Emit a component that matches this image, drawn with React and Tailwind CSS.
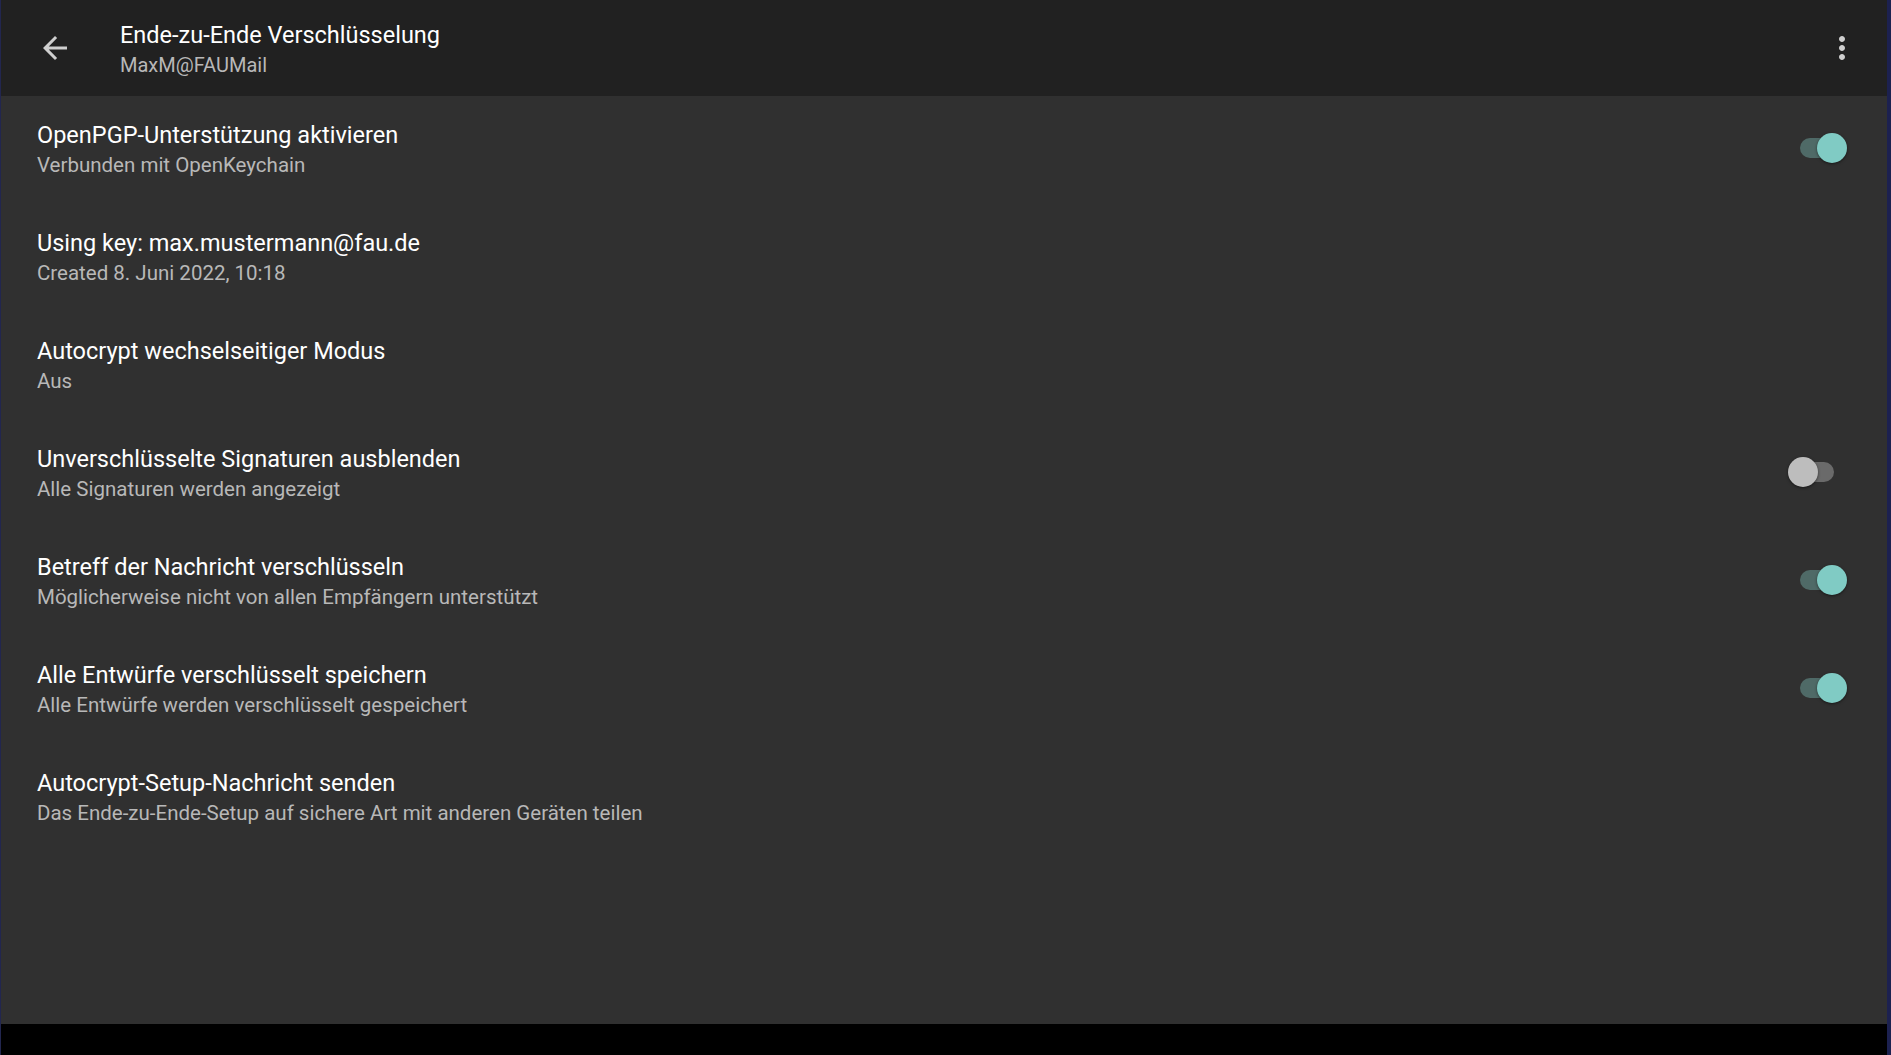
import React, { useState } from 'react';

const items = [
  { title: 'OpenPGP-Unterstützung aktivieren', summary: 'Verbunden mit OpenKeychain', toggle: true },
  { title: 'Using key: max.mustermann@fau.de', summary: 'Created 8. Juni 2022, 10:18' },
  { title: 'Autocrypt wechselseitiger Modus', summary: 'Aus' },
  { title: 'Unverschlüsselte Signaturen ausblenden', summary: 'Alle Signaturen werden angezeigt', toggle: false },
  { title: 'Betreff der Nachricht verschlüsseln', summary: 'Möglicherweise nicht von allen Empfängern unterstützt', toggle: true },
  { title: 'Alle Entwürfe verschlüsselt speichern', summary: 'Alle Entwürfe werden verschlüsselt gespeichert', toggle: true },
  { title: 'Autocrypt-Setup-Nachricht senden', summary: 'Das Ende-zu-Ende-Setup auf sichere Art mit anderen Geräten teilen' },
];

// little material style switch
function Switch({ checked, onChange }) {
  return (
    <button type="button" onClick={onChange} className="relative w-[59px] h-[30px] shrink-0 -mt-[5px]">
      <span
        className={`absolute left-[12px] top-[5px] w-[34px] h-[20px] rounded-full ${
          checked ? 'bg-[#4f6a67]' : 'bg-[#6a6a6a]'
        }`}
      />
      <span
        className={`absolute top-0 w-[30px] h-[30px] rounded-full shadow-[0_1px_3px_rgba(0,0,0,0.5)] ${
          checked ? 'left-[29px] bg-[#80cbc4]' : 'left-0 bg-[#bdbdbd]'
        }`}
      />
    </button>
  );
}

export default function App() {
  const [toggles, setToggles] = useState(items.map((i) => i.toggle));

  const flip = (idx) => {
    setToggles((prev) => prev.map((v, i) => (i === idx ? !v : v)));
  };

  return (
    <div
      className="w-full h-[1055px] flex flex-col bg-black border-l border-l-[#22264f] border-r-4 border-r-[#1c2150] overflow-hidden"
      style={{ fontFamily: 'Roboto, "Noto Sans", sans-serif' }}
    >
      {/* Toolbar */}
      <div className="h-[96px] shrink-0 bg-[#212121] flex items-center pl-[36px] pr-[27px]">
        <button type="button" className="w-[36px] h-[36px] shrink-0 text-[#cfcfcf]">
          <svg viewBox="0 0 24 24" className="w-[36px] h-[36px]" fill="currentColor">
            <path d="M20 11H7.83l5.59-5.59L12 4l-8 8 8 8 1.41-1.41L7.83 13H20v-2z" />
          </svg>
        </button>
        <div className="ml-[47px] flex-1 self-start pt-[20px]">
          <div className="text-[23.5px] leading-[30px] text-white">Ende-zu-Ende Verschlüsselung</div>
          <div className="text-[20px] leading-[30px] text-[#b8b8b8]">MaxM@FAUMail</div>
        </div>
        <button type="button" className="w-[36px] h-[36px] shrink-0 text-[#cfcfcf]">
          <svg viewBox="0 0 24 24" className="w-[36px] h-[36px]" fill="currentColor">
            <path d="M12 8c1.1 0 2-.9 2-2s-.9-2-2-2-2 .9-2 2 .9 2 2 2zm0 2c-1.1 0-2 .9-2 2s.9 2 2 2 2-.9 2-2-.9-2-2-2zm0 6c-1.1 0-2 .9-2 2s.9 2 2 2 2-.9 2-2-.9-2-2-2z" />
          </svg>
        </button>
      </div>

      {/* Preference list */}
      <div className="flex-1 bg-[#303030] flex flex-col">
        {items.map((item, idx) => (
          <div key={item.title} className="h-[108px] flex items-center pl-[36px] pr-[40px]">
            <div className="flex-1 min-w-0">
              <div className="text-[23.5px] leading-[30px] text-white">{item.title}</div>
              <div className="text-[20.5px] leading-[30px] text-[#b8b8b8]">{item.summary}</div>
            </div>
            {item.toggle !== undefined && (
              <Switch checked={toggles[idx]} onChange={() => flip(idx)} />
            )}
          </div>
        ))}
      </div>

      {/* nav bar area */}
      <div className="h-[31px] shrink-0 bg-black" />
    </div>
  );
}
